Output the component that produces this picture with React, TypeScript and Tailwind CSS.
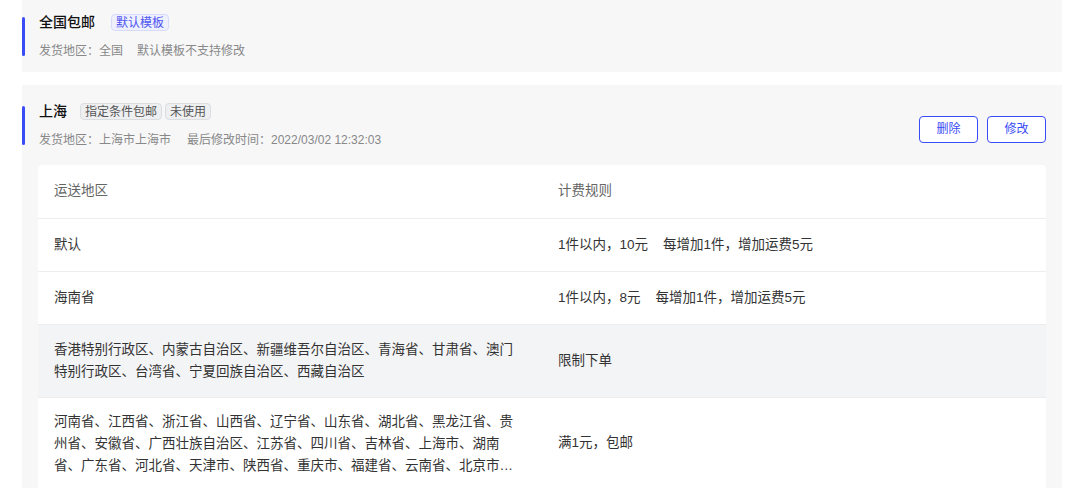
export default function App() {
  const rows = [
    { area: "默认", rule: "1件以内，10元\u00a0\u00a0\u00a0\u00a0每增加1件，增加运费5元", h: "h-[53px]" },
    { area: "海南省", rule: "1件以内，8元\u00a0\u00a0\u00a0\u00a0每增加1件，增加运费5元", h: "h-[53px]" },
    {
      area: "香港特别行政区、内蒙古自治区、新疆维吾尔自治区、青海省、甘肃省、澳门特别行政区、台湾省、宁夏回族自治区、西藏自治区",
      rule: "限制下单",
      h: "h-[73px]",
      gray: true,
    },
    {
      area: "河南省、江西省、浙江省、山西省、辽宁省、山东省、湖北省、黑龙江省、贵州省、安徽省、广西壮族自治区、江苏省、四川省、吉林省、上海市、湖南省、广东省、河北省、天津市、陕西省、重庆市、福建省、云南省、北京市、海南省",
      rule: "满1元，包邮",
      h: "h-[92px]",
      clamp: true,
    },
  ]
  return (
    <div className="w-[1070px] h-[488px] overflow-hidden bg-white text-[13.5px] text-[#333]" style={{ fontFamily: '"Liberation Sans", "Noto Sans CJK SC", sans-serif' }}>
      <div className="ml-[22px] mr-[8px] bg-[#f7f7f8] h-[72px] flex items-center">
        <div className="w-[3px] h-[39px] bg-[#3a4cf5] rounded-sm" />
        <div className="ml-[14px] flex flex-col gap-[9px]">
          <div className="flex items-center gap-[16px]">
            <span className="text-[14px] font-medium text-[#111]">全国包邮</span>
            <span className="px-[4px] h-[17px] leading-[16px] text-[12px] text-[#4e55f0] bg-[#eef0fe] border border-[#d6dbfb] rounded-sm">默认模板</span>
          </div>
          <div className="text-[12px] text-[#888]">发货地区：全国<span className="ml-[14px]">默认模板不支持修改</span></div>
        </div>
      </div>
      <div className="ml-[22px] mr-[8px] mt-[13px] bg-[#f7f7f8] px-[16px] pb-[16px]">
        <div className="h-[80px] flex items-center -ml-[16px]">
          <div className="w-[3px] h-[39px] bg-[#3a4cf5] rounded-sm" />
          <div className="ml-[14px] flex flex-col gap-[9px] flex-1">
            <div className="flex items-center gap-[3px]">
              <span className="text-[14px] font-medium text-[#111] mr-[10px]">上海</span>
              <span className="px-[4px] h-[17px] leading-[16px] text-[12px] text-[#555] bg-[#eeeff1] border border-[#dcdde0] rounded-sm">指定条件包邮</span>
              <span className="px-[4px] h-[17px] leading-[16px] text-[12px] text-[#555] bg-[#eeeff1] border border-[#dcdde0] rounded-sm">未使用</span>
            </div>
            <div className="text-[12px] text-[#888]">发货地区：上海市上海市<span className="ml-[16px]">最后修改时间：2022/03/02 12:32:03</span></div>
          </div>
          <div className="flex gap-[9px] mt-[8px]">
            <button className="w-[59px] h-[27px] border border-[#3a4cf5] text-[#3a4cf5] rounded-[4px] bg-white text-[12px]">删除</button>
            <button className="w-[59px] h-[27px] border border-[#3a4cf5] text-[#3a4cf5] rounded-[4px] bg-white text-[12px]">修改</button>
          </div>
        </div>
        <div className="bg-white rounded-[4px]">
          <div className="h-[54px] flex items-center border-b border-[#ededed] text-[#666]">
            <div className="w-[520px] pl-[16px]">运送地区</div>
            <div>计费规则</div>
          </div>
          {rows.map((r, i) => (
            <div key={i} className={`${r.h} flex items-center border-b border-[#ededed] ${r.gray ? "bg-[#f3f4f6]" : ""}`}>
              <div className="w-[520px] pl-[16px] pr-[38px] leading-[22px]">
                <div className={r.clamp ? "line-clamp-3" : ""}>{r.area}</div>
              </div>
              <div>{r.rule}</div>
            </div>
          ))}
        </div>
      </div>
    </div>
  )
}
